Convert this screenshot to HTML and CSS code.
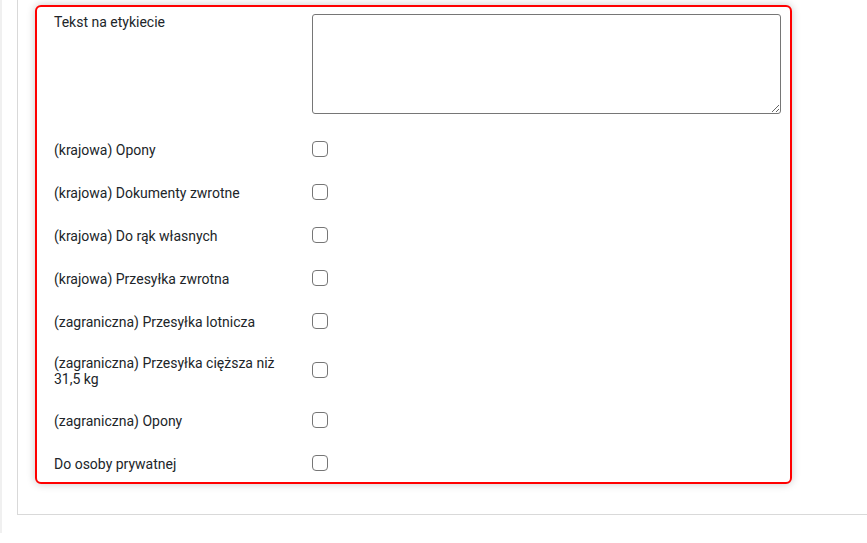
FILE: index.html
```html
<!DOCTYPE html>
<html lang="pl">
<head>
<meta charset="utf-8">
<title>Formularz</title>
<link rel="stylesheet" href="styles.css">
</head>
<body>
<div class="page">
  <div class="card">
    <div class="panel">
      <div class="row row-text">
        <label class="lbl" for="t1">Tekst na etykiecie</label>
        <div class="ctl"><textarea id="t1" class="area"></textarea></div>
      </div>
      <div class="row">
        <label class="lbl" for="c1">(krajowa) Opony</label>
        <div class="ctl"><input type="checkbox" id="c1" class="chk"></div>
      </div>
      <div class="row">
        <label class="lbl" for="c2">(krajowa) Dokumenty zwrotne</label>
        <div class="ctl"><input type="checkbox" id="c2" class="chk"></div>
      </div>
      <div class="row">
        <label class="lbl" for="c3">(krajowa) Do rąk własnych</label>
        <div class="ctl"><input type="checkbox" id="c3" class="chk"></div>
      </div>
      <div class="row">
        <label class="lbl" for="c4">(krajowa) Przesyłka zwrotna</label>
        <div class="ctl"><input type="checkbox" id="c4" class="chk"></div>
      </div>
      <div class="row">
        <label class="lbl" for="c5">(zagraniczna) Przesyłka lotnicza</label>
        <div class="ctl"><input type="checkbox" id="c5" class="chk"></div>
      </div>
      <div class="row">
        <label class="lbl" for="c6">(zagraniczna) Przesyłka cięższa niż 31,5 kg</label>
        <div class="ctl"><input type="checkbox" id="c6" class="chk"></div>
      </div>
      <div class="row">
        <label class="lbl" for="c7">(zagraniczna) Opony</label>
        <div class="ctl"><input type="checkbox" id="c7" class="chk"></div>
      </div>
      <div class="row">
        <label class="lbl" for="c8">Do osoby prywatnej</label>
        <div class="ctl"><input type="checkbox" id="c8" class="chk"></div>
      </div>
    </div>
  </div>
</div>
</body>
</html>
```
FILE: styles.css
```css
html, body {
  margin: 0;
  padding: 0;
  background: #fff;
  height: 100%;
  overflow: hidden;
}
body {
  font-family: Roboto, "Liberation Sans", Arial, sans-serif;
  font-size: 14px;
  color: #212529;
}
.page {
  height: 543px;
  border-left: 2px solid #f0f0f0;
  box-sizing: border-box;
  padding-left: 15px;
}
.card {
  margin-top: -10px;
  height: 525px;
  box-sizing: border-box;
  border-left: 1px solid #d9d9d9;
  border-bottom: 1px solid #d9d9d9;
  padding: 15px 0 0 17px;
}
.panel {
  width: 757px;
  box-sizing: border-box;
  border: 2px solid #ff0000;
  border-radius: 6px;
  box-shadow: 0 0 8px rgba(0, 0, 0, 0.22);
  padding: 7px 9px 0 17px;
  background: #fff;
}
.row {
  display: flex;
  align-items: center;
  padding: 12px 0;
}
.row:last-child {
  padding-bottom: 9px;
}
.row-text {
  align-items: flex-start;
  padding: 0 0 14px;
}
.lbl {
  width: 238px;
  flex: 0 0 238px;
  padding-right: 20px;
  line-height: 16px;
}
.ctl {
  min-height: 19px;
  display: flex;
  align-items: center;
}
.area {
  display: block;
  margin: 0;
  width: 469px;
  height: 100px;
  box-sizing: border-box;
  border: 1px solid #767676;
  border-radius: 3px;
  resize: vertical;
  font: inherit;
}
.chk {
  appearance: none;
  -webkit-appearance: none;
  margin: 0 0 2px;
  width: 16px;
  height: 16px;
  box-sizing: border-box;
  border: 1px solid #767676;
  border-radius: 4px;
  background: #fff;
}
```
